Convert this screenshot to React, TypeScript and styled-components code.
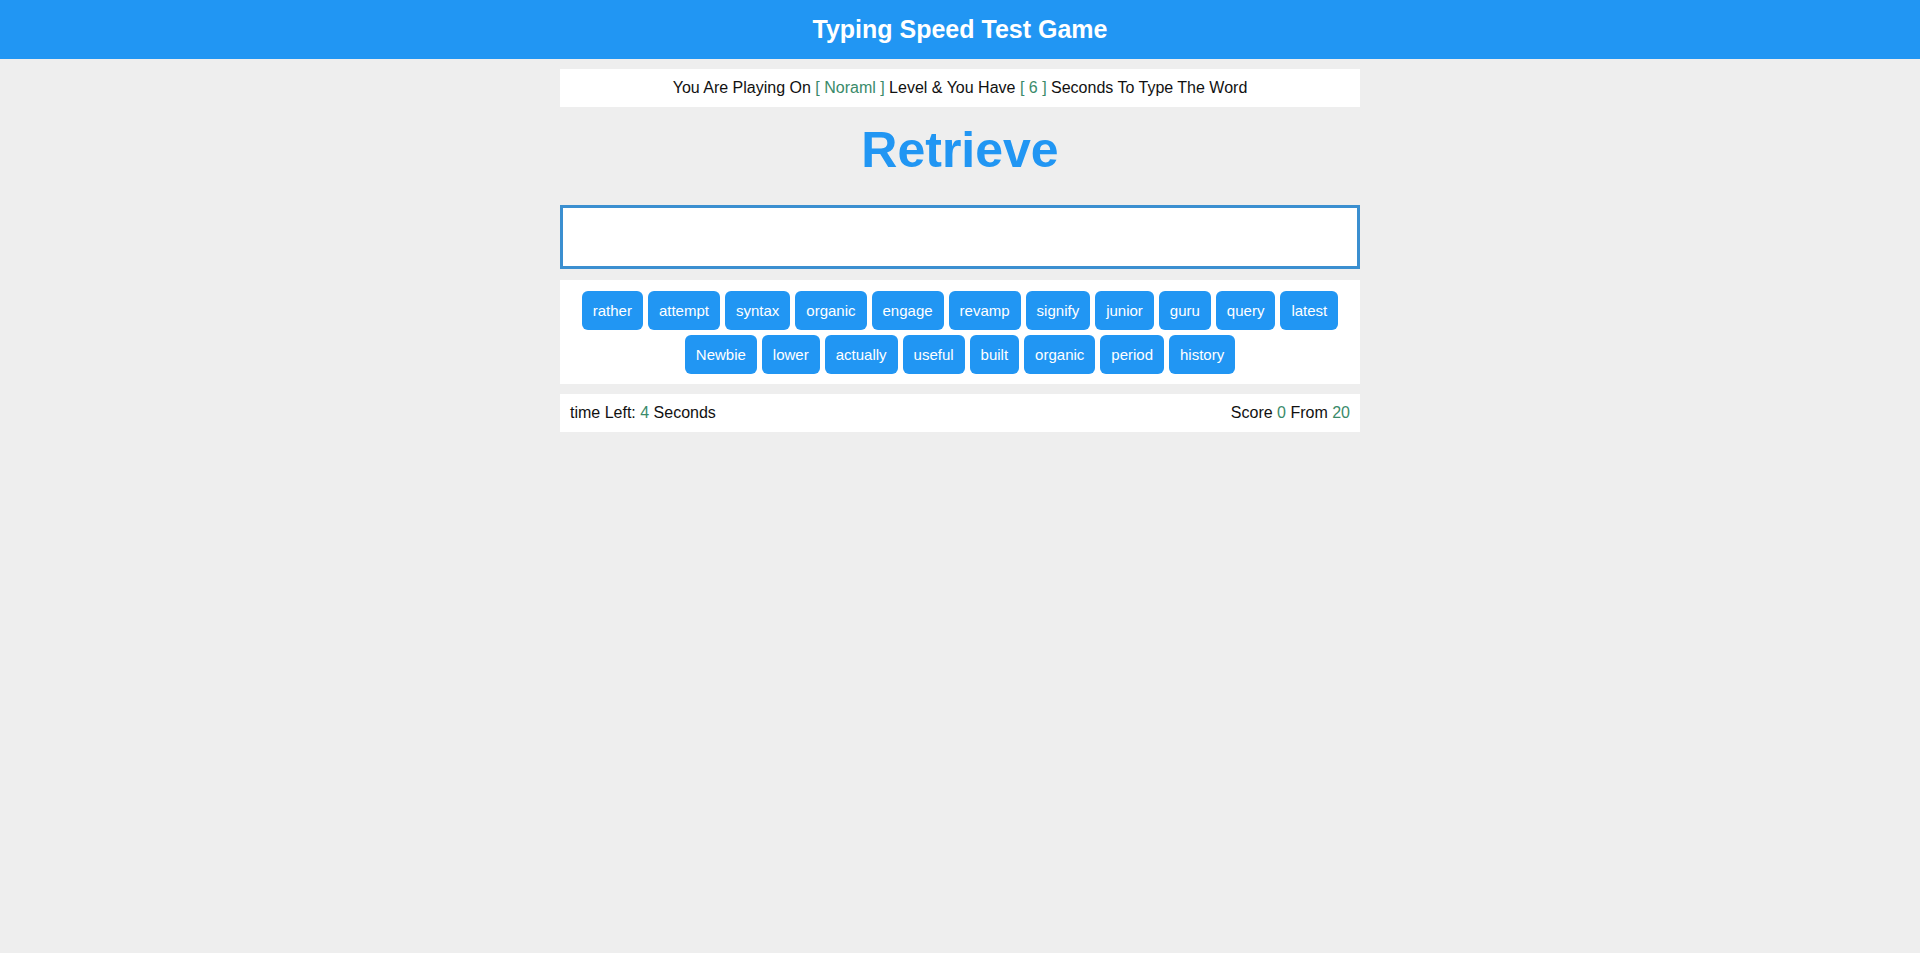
import React from "react";
import styled, {createGlobalStyle} from "styled-components";

const blue = "#2196f3";
const green = "#3a8a6a";

const GlobalStyle = createGlobalStyle`
body {
margin: 0;
background: #eeeeee;
font-family: "Liberation Sans", Arial, sans-serif;
}
`;

const words = [
    "rather", "attempt", "syntax", "organic", "engage", "revamp", "signify", "junior", "guru", "query", "latest",
    "Newbie", "lower", "actually", "useful", "built", "organic", "period", "history",
];

const App: React.FC = () => {
    return <>
        <GlobalStyle/>
        <Header>Typing Speed Test Game</Header>
        <Game>
            <Message>
                You Are Playing On <Hl>[ Noraml ]</Hl> Level &amp; You Have <Hl>[ 6 ]</Hl> Seconds To Type The Word
            </Message>
            <Word>Retrieve</Word>
            <Input type="text"/>
            <Upcoming>
                {words.map((w, i) => <Chip key={i}>{w}</Chip>)}
            </Upcoming>
            <Control>
                <span>time Left: <Hl>4</Hl> Seconds</span>
                <span>Score <Hl>0</Hl> From <Hl>20</Hl></span>
            </Control>
        </Game>
    </>;
};

const Header = styled.h1`
margin: 0;
height: 59px;
display: flex;
align-items: center;
justify-content: center;
background: ${blue};
color: #fff;
font-size: 25px;
font-weight: bold;
`;
const Game = styled.div`
width: 800px;
margin: 10px auto 0;
display: flex;
flex-direction: column;
`;
const Message = styled.div`
background: #fff;
padding: 10px;
text-align: center;
font-size: 16px;
line-height: 18px;
color: #111;
`;
const Hl = styled.span`
color: ${green};
`;
const Word = styled.div`
margin: 14px 0 26px;
text-align: center;
font-size: 50px;
font-weight: bold;
color: ${blue};
`;
const Input = styled.input`
box-sizing: border-box;
width: 100%;
height: 64px;
border: 3px solid #3b8fd0;
background: #fff;
outline: none;
font-size: 30px;
text-align: center;
font-family: inherit;
`;
const Upcoming = styled.div`
margin-top: 11px;
background: #fff;
padding: 11px 20px 10px;
display: flex;
flex-wrap: wrap;
justify-content: center;
gap: 5px;
`;
const Chip = styled.span`
background: ${blue};
color: #fff;
font-size: 15px;
line-height: 19px;
padding: 10px 11px;
border-radius: 6px;
`;
const Control = styled.div`
margin-top: 10px;
background: #fff;
padding: 10px;
display: flex;
justify-content: space-between;
font-size: 16px;
line-height: 18px;
color: #111;
`;

export default App;
